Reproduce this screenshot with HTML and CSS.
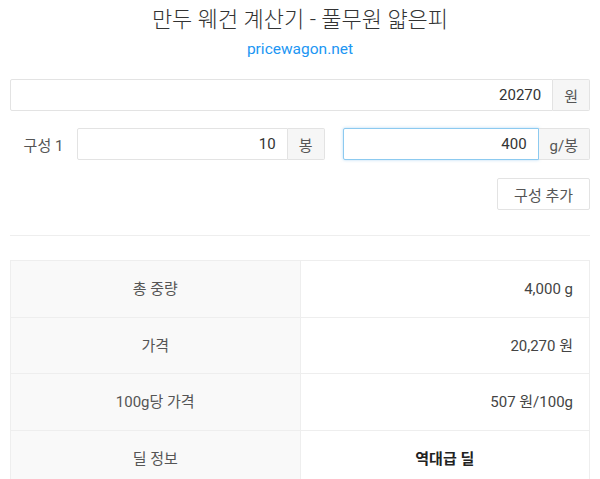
FILE: index.html
```html
<!DOCTYPE html>
<html lang="ko">
<head>
    <meta charset="UTF-8">
    <meta name="viewport" content="width=device-width, initial-scale=1.0">
    <title>만두 웨건 계산기 - 풀무원 얇은피</title>
    <link rel="stylesheet" href="styles.css">
</head>
<body>
    <div class="container">
        <div class="header">
            <h1>만두 웨건 계산기 - 풀무원 얇은피</h1>
            <a class="site" href="#">pricewagon.net</a>
        </div>

        <div class="input-group price-group">
            <input type="text" id="price" value="20270">
            <span class="addon">원</span>
        </div>

        <div class="component-row">
            <div class="component-label">구성 1</div>
            <div class="field-pair">
                <div class="input-group">
                    <input type="text" id="count" value="10">
                    <span class="addon">봉</span>
                </div>
                <div class="input-group">
                    <input type="text" id="weight" class="focused" value="400">
                    <span class="addon">g/봉</span>
                </div>
            </div>
        </div>

        <div class="actions">
            <button class="add-btn">구성 추가</button>
        </div>

        <hr class="divider">

        <table class="result">
            <tr>
                <td class="key">총 중량</td>
                <td class="val">4,000 g</td>
            </tr>
            <tr>
                <td class="key">가격</td>
                <td class="val">20,270 원</td>
            </tr>
            <tr>
                <td class="key">100g당 가격</td>
                <td class="val">507 원/100g</td>
            </tr>
            <tr>
                <td class="key">딜 정보</td>
                <td class="val deal">역대급 딜</td>
            </tr>
        </table>
    </div>
</body>
</html>
```

FILE: styles.css
```css
body {
    margin: 0;
    padding: 0;
    background: #fff;
    color: #444;
    font-family: Roboto, "Noto Sans CJK KR", sans-serif;
}
.container {
    padding: 0 10px;
}
.header {
    text-align: center;
}
.header h1 {
    margin: 0;
    padding-top: 6px;
    font-size: 22px;
    font-weight: 300;
    line-height: 28px;
    color: #333;
}
.site {
    display: block;
    margin-top: 5px;
    line-height: 20px;
    font-size: 15.5px;
    color: #2196f3;
    text-decoration: none;
}

.input-group {
    display: flex;
    height: 32px;
    min-width: 0;
}
.input-group input {
    flex: 1;
    min-width: 0;
    width: 0;
    box-sizing: border-box;
    height: 32px;
    border: 1px solid #e3e3e3;
    border-radius: 2px 0 0 2px;
    padding: 0 11px;
    text-align: right;
    font-family: Roboto, "Noto Sans CJK KR", sans-serif;
    font-size: 15px;
    color: #333;
    outline: none;
}
.input-group input.focused {
    border-color: #8ccaf0;
    box-shadow: 0 0 3px rgba(102, 175, 233, 0.5);
}
.addon {
    display: flex;
    align-items: center;
    justify-content: center;
    box-sizing: border-box;
    padding: 0 11px;
    background: #f6f6f6;
    border: 1px solid #e3e3e3;
    border-left: none;
    border-radius: 0 2px 2px 0;
    font-size: 15px;
    color: #555;
    white-space: nowrap;
}
.price-group {
    margin-top: 20px;
}

.component-row {
    display: flex;
    align-items: center;
    margin-top: 17px;
}
.component-label {
    flex: 0 0 67px;
    text-align: center;
    font-size: 15px;
    color: #555;
}
.field-pair {
    flex: 1;
    min-width: 0;
    display: flex;
    gap: 18px;
}
.field-pair .input-group {
    flex: 1 1 0;
}

.actions {
    display: flex;
    justify-content: flex-end;
    margin-top: 18px;
}
.add-btn {
    height: 32px;
    padding: 0 16px;
    background: #fff;
    border: 1px solid #e3e3e3;
    border-radius: 2px;
    font-family: Roboto, "Noto Sans CJK KR", sans-serif;
    font-size: 15px;
    color: #555;
}

.divider {
    margin: 25px 0 0;
    border: none;
    border-top: 1px solid #eee;
}

.result {
    width: 100%;
    margin-top: 24px;
    border-collapse: collapse;
    border: 1px solid #eee;
    font-size: 15px;
}
.result td {
    width: 50%;
    padding: 18px 16px 17.5px;
    line-height: 20px;
    border-top: 1px solid #eee;
}
.result .key {
    background: #f9f9f9;
    text-align: center;
    color: #555;
    border-right: 1px solid #eee;
}
.result .val {
    text-align: right;
    color: #444;
}
.result .deal {
    text-align: center;
    font-weight: bold;
    color: #222;
}
```
